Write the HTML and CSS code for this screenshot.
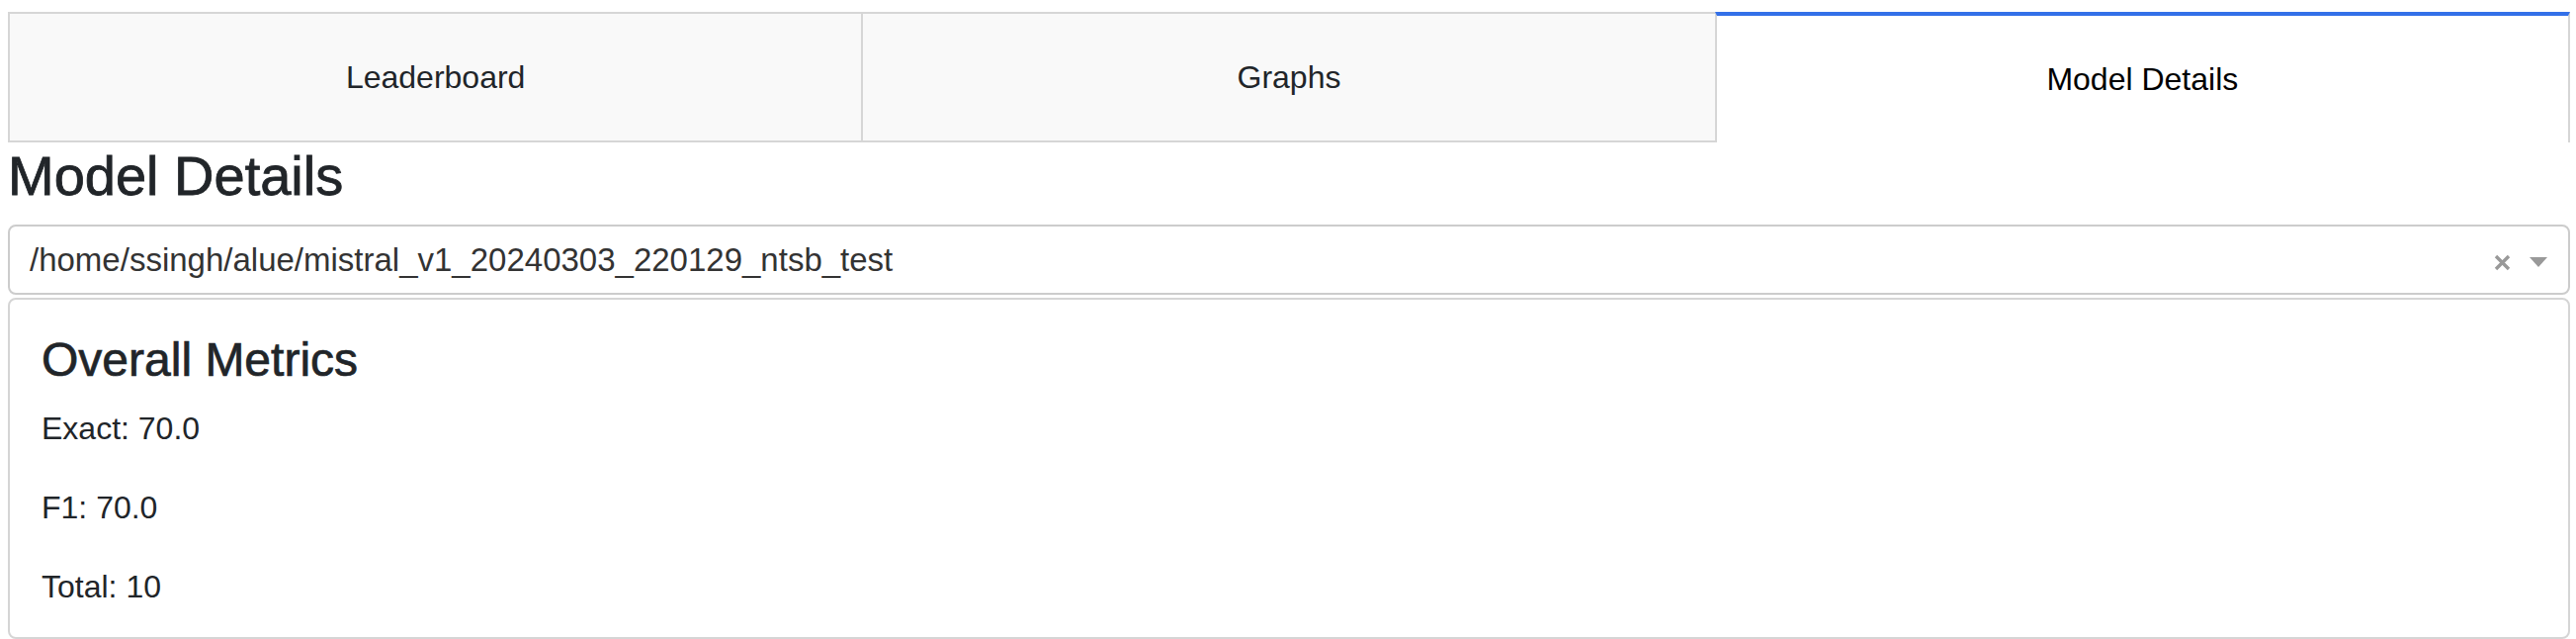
FILE: index.html
```html
<!DOCTYPE html>
<html lang="en">
<head>
<meta charset="utf-8">
<title>Model Details</title>
<link rel="stylesheet" href="styles.css">
</head>
<body>
<div class="page">
  <div class="tabs">
    <div class="tab">Leaderboard</div>
    <div class="tab">Graphs</div>
    <div class="tab tab--selected">Model Details</div>
  </div>
  <h3 class="title">Model Details</h3>
  <div class="dropdown">
    <span class="dropdown-value">/home/ssingh/alue/mistral_v1_20240303_220129_ntsb_test</span>
    <span class="dropdown-clear"><svg width="17" height="17" viewBox="0 0 17 17"><path d="M2 2 L15 15 M15 2 L2 15" stroke="#999" stroke-width="3.4" fill="none"/></svg></span>
    <span class="dropdown-arrow"></span>
  </div>
  <div class="card">
    <h4 class="card-title">Overall Metrics</h4>
    <p class="metric">Exact: 70.0</p>
    <p class="metric">F1: 70.0</p>
    <p class="metric">Total: 10</p>
  </div>
</div>
</body>
</html>
```
FILE: styles.css
```css
html, body {
  margin: 0;
  background: #fff;
}
body {
  font-family: "Liberation Sans", Arial, sans-serif;
  color: #212529;
}
.page {
  padding: 12px 6px 0 8px;
}
.tabs {
  display: flex;
  height: 132px;
}
.tab {
  flex: 1 1 0;
  box-sizing: border-box;
  display: flex;
  align-items: center;
  justify-content: center;
  background: #f9f9f9;
  border: 2px solid #d6d6d6;
  border-right: none;
  font-size: 32px;
  color: #212529;
}
.tab:last-child {
  border-right: 2px solid #d6d6d6;
}
.tab--selected {
  background: #fff;
  border-top: 4px solid #3370e8;
  border-bottom: none;
  color: #000;
}
.title {
  margin: 0 0 16px;
  font-size: 56px;
  font-weight: 500;
  line-height: 1.2;
  -webkit-text-stroke: 0.8px #212529;
}
.dropdown {
  box-sizing: border-box;
  height: 71px;
  display: flex;
  align-items: center;
  padding: 0 21px 0 20px;
  border: 2px solid #ccc;
  border-radius: 8px;
  background: #fff;
}
.dropdown-value {
  flex: 1;
  font-size: 33px;
  color: #333;
  white-space: nowrap;
}
.dropdown-clear {
  display: flex;
  margin: 5px 19px 0 0;
}
.dropdown-arrow {
  width: 0;
  height: 0;
  margin-top: 5px;
  border-top: 10px solid #999;
  border-left: 9px solid transparent;
  border-right: 9px solid transparent;
}
.card {
  margin-top: 3px;
  border: 2px solid #d5d5d5;
  border-radius: 8px;
  padding: 32px 32px 27px;
  background: #fff;
}
.card-title {
  margin: 0 0 16px;
  font-size: 48px;
  font-weight: 500;
  line-height: 1.2;
  -webkit-text-stroke: 0.7px #212529;
}
.metric {
  margin: 0 0 32px;
  font-size: 32px;
  line-height: 1.5;
}
.metric:last-child {
  margin-bottom: 0;
}
```
